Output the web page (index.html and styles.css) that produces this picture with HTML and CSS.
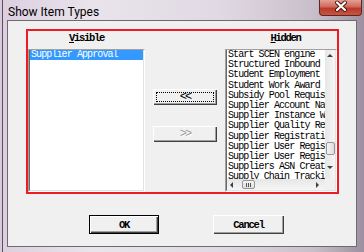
FILE: index.html
```html
<!DOCTYPE html>
<html lang="en">
<head>
    <meta charset="UTF-8">
    <title>Show Item Types</title>
    <link rel="stylesheet" href="styles.css">
</head>
<body>
    <div class="window">
        <div class="titlebar">
            <span class="title">Show Item Types</span>
            <div class="close">
                <svg width="43" height="16" viewBox="0 0 43 16">
                    <path d="M18 3.5 L26 11 M26 3.5 L18 11" stroke="#4a1510" stroke-width="4" stroke-linecap="round"/>
                    <path d="M18 3.5 L26 11 M26 3.5 L18 11" stroke="#fff" stroke-width="2.2" stroke-linecap="round"/>
                </svg>
            </div>
        </div>

        <div class="client">
            <div class="picker">
                <div class="col col-visible">
                    <div class="caption"><u>V</u>isible</div>
                    <div class="field">
                        <div class="field-in">
                            <div class="item selected">Supplier Approval</div>
                        </div>
                    </div>
                </div>

                <div class="mover">
                    <button class="btn move focused">&lt;&lt;</button>
                    <button class="btn move" disabled>&gt;&gt;</button>
                </div>

                <div class="col col-hidden">
                    <div class="caption caption-hidden"><u>H</u>idden</div>
                    <div class="field">
                        <div class="field-in scrolled">
                            <div class="list-area">
                                <div class="items">
                                    <div class="item">Start SCEN engine</div>
                                    <div class="item">Structured Inbound Items</div>
                                    <div class="item">Student Employment Items</div>
                                    <div class="item">Student Work Award Items</div>
                                    <div class="item">Subsidy Pool Requisition</div>
                                    <div class="item">Supplier Account Name</div>
                                    <div class="item">Supplier Instance Workflow</div>
                                    <div class="item">Supplier Quality Review</div>
                                    <div class="item">Supplier Registration</div>
                                    <div class="item">Supplier User Registration</div>
                                    <div class="item">Supplier User Registry</div>
                                    <div class="item">Suppliers ASN Creation</div>
                                    <div class="item">Supply Chain Tracking</div>
                                </div>
                                <div class="vbar">
                                    <div class="arrow arrow-up"></div>
                                    <div class="vthumb"></div>
                                    <div class="arrow arrow-down"></div>
                                </div>
                            </div>
                            <div class="hbar-row">
                                <div class="hbar">
                                    <div class="arrow arrow-left"></div>
                                    <div class="hthumb"><span></span><span></span><span></span></div>
                                    <div class="arrow arrow-right"></div>
                                </div>
                                <div class="corner"></div>
                            </div>
                        </div>
                    </div>
                </div>
            </div>

            <div class="actions">
                <button class="btn btn-ok">OK</button>
                <button class="btn btn-cancel">Cancel</button>
            </div>
        </div>
    </div>
</body>
</html>
```

FILE: styles.css
```css
body {
    margin: 0;
    background: #d9cadc;
    font-family: "Liberation Mono", monospace;
}
.window {
    width: 362px;
    height: 252px;
    margin-left: 2px;
    box-sizing: border-box;
    border-left: 1px solid #5a5060;
    padding: 0 7px 5px 4px;
    background: linear-gradient(to right, #dccfe0 0%, #e9e4ec 25%, #e0d9e3 60%, #c9bfcb 86%, #9d90a0 100%);
}
.titlebar {
    height: 20px;
    display: flex;
    justify-content: space-between;
    align-items: flex-start;
}
.title {
    font-family: Roboto, sans-serif;
    font-size: 12px;
    line-height: 16px;
    padding: 4px 0 0 1px;
    color: #000;
}
.close {
    width: 43px;
    height: 16px;
    margin-right: -5px;
    box-sizing: border-box;
    border: 1px solid #5e2620;
    border-top: none;
    border-radius: 0 0 4px 4px;
    background: linear-gradient(#e2a093 0%, #cf6a5c 45%, #b9392b 55%, #c8553f 100%);
    overflow: hidden;
}
.close svg {
    display: block;
    margin: -1px 0 0 -1px;
}
.client {
    width: 350px;
    height: 227px;
    box-sizing: border-box;
    border: 1px solid #6e6a70;
    background: #f0f0f0;
    padding-top: 8px;
}
.picker {
    width: 313px;
    height: 165px;
    margin-left: 18px;
    box-sizing: border-box;
    border: 2px solid #ed1c24;
    display: flex;
}
.col-visible {
    width: 117px;
}
.col-hidden {
    width: 112px;
}
.mover {
    width: 80px;
    display: flex;
    flex-direction: column;
    align-items: center;
    padding-top: 58px;
    box-sizing: border-box;
}
.caption {
    height: 18px;
    box-sizing: border-box;
    padding-top: 1px;
    text-align: center;
    font-size: 10.5px;
    font-weight: bold;
    letter-spacing: -1.3px;
    line-height: 12px;
}
.caption-hidden {
    padding-left: 9px;
}
.field {
    height: 143px;
    box-sizing: border-box;
    border: 1px solid;
    border-color: #a0a0a0 #fff #fff #a0a0a0;
}
.field-in {
    height: 100%;
    box-sizing: border-box;
    border: 1px solid;
    border-top-width: 0;
    border-color: #696969 #e3e3e3 #e3e3e3 #696969;
    background: #fff;
    overflow: hidden;
}
.item {
    height: 10.2px;
    line-height: 10.2px;
    padding-left: 1px;
    font-size: 10px;
    letter-spacing: -0.9px;
    white-space: nowrap;
    color: #000;
}
.selected {
    background: #3399ff;
    color: #fff;
}
.scrolled {
    display: flex;
    flex-direction: column;
}
.list-area {
    flex: 1;
    display: flex;
    min-height: 0;
}
.items {
    flex: 1;
    overflow: hidden;
}
.vbar {
    width: 10px;
    display: flex;
    flex-direction: column;
    align-items: center;
    background: linear-gradient(to right, #e6e6e6, #f6f6f6);
}
.hbar-row {
    height: 11px;
    display: flex;
}
.hbar {
    flex: 1;
    display: flex;
    align-items: center;
    background: linear-gradient(#e6e6e6, #f6f6f6);
}
.corner {
    width: 10px;
    background: #f0f0f0;
}
.arrow {
    width: 0;
    height: 0;
}
.arrow-up {
    margin-top: 4px;
    border-left: 3px solid transparent;
    border-right: 3px solid transparent;
    border-bottom: 3px solid #404040;
}
.arrow-down {
    margin-top: 11px;
    border-left: 3px solid transparent;
    border-right: 3px solid transparent;
    border-top: 3px solid #404040;
}
.arrow-left {
    margin-left: 3px;
    border-top: 3px solid transparent;
    border-bottom: 3px solid transparent;
    border-right: 3px solid #404040;
}
.arrow-right {
    margin-left: 61px;
    border-top: 3px solid transparent;
    border-bottom: 3px solid transparent;
    border-left: 3px solid #404040;
}
.vthumb {
    width: 9px;
    height: 13px;
    margin-top: 85px;
    box-sizing: border-box;
    border: 1px solid #979797;
    border-radius: 2px;
    background: linear-gradient(to right, #f5f5f5, #dedede);
}
.hthumb {
    width: 13px;
    height: 9px;
    margin-left: 9px;
    box-sizing: border-box;
    border: 1px solid #979797;
    border-radius: 2px;
    background: linear-gradient(#f5f5f5, #dedede);
    display: flex;
    justify-content: center;
    align-items: center;
    gap: 1px;
}
.hthumb span {
    width: 1px;
    height: 4px;
    background: #555;
}
.btn {
    padding: 0;
    border: 0;
    background: #f0f0f0;
    font-family: "Liberation Mono", monospace;
    font-size: 10.5px;
    font-weight: bold;
    letter-spacing: -1.2px;
    color: #000;
    box-shadow: inset 1px 1px #fff, inset -1px -1px #404040, inset -2px -2px #a0a0a0;
}
.move {
    width: 64px;
    height: 16px;
    font-size: 12px;
    font-weight: normal;
    letter-spacing: -2px;
}
.move + .move {
    margin-top: 21px;
}
.focused {
    outline: 1px dotted #000;
    outline-offset: -4px;
}
.btn:disabled {
    color: #a0a0a0;
    text-shadow: 1px 1px #fff;
}
.actions {
    display: flex;
    gap: 54px;
    margin-top: 21px;
    padding-left: 81px;
}
.btn-ok {
    width: 70px;
    height: 19px;
    border: 1px solid #000;
}
.btn-cancel {
    width: 71px;
    height: 19px;
}
```
